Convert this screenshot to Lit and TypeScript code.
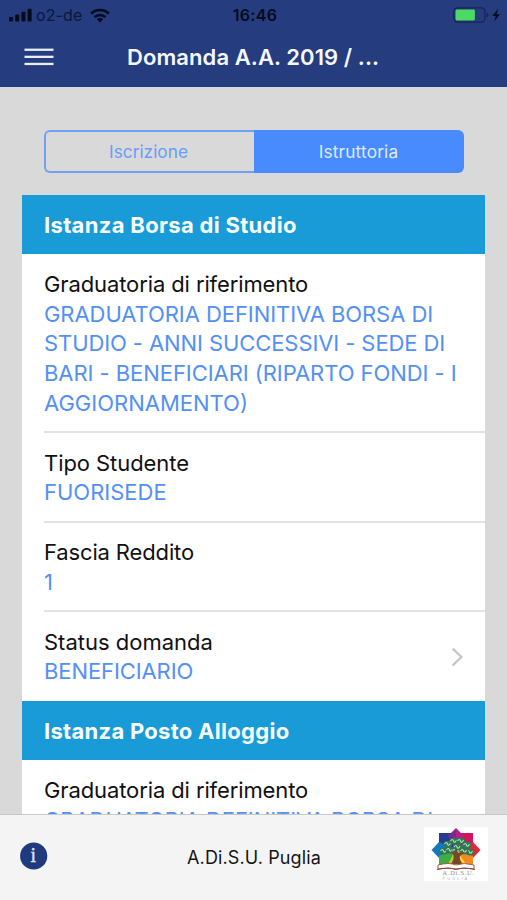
import { LitElement, html, css, svg } from "lit";
import { customElement, property } from "lit/decorators.js";

interface Row { label: string; lines: string[]; tracks: number[]; labelTrack: number; link?: boolean; }
interface Section { title: string; track: number; rows: Row[]; }

const SECTIONS: Section[] = [
  {
    title: "Istanza Borsa di Studio", track: 0.32,
    rows: [
      {
        label: "Graduatoria di riferimento", labelTrack: -0.11,
        lines: ["GRADUATORIA DEFINITIVA BORSA DI", "STUDIO - ANNI SUCCESSIVI - SEDE DI", "BARI - BENEFICIARI (RIPARTO FONDI - I", "AGGIORNAMENTO)"],
        tracks: [-0.06, -0.09, -0.06, 0],
      },
      { label: "Tipo Studente", labelTrack: -0.07, lines: ["FUORISEDE"], tracks: [0] },
      { label: "Fascia Reddito", labelTrack: -0.14, lines: ["1"], tracks: [0] },
      { label: "Status domanda", labelTrack: 0, lines: ["BENEFICIARIO"], tracks: [-0.1], link: true },
    ],
  },
  {
    title: "Istanza Posto Alloggio", track: 0.28,
    rows: [
      { label: "Graduatoria di riferimento", labelTrack: -0.11, lines: ["GRADUATORIA DEFINITIVA BORSA DI"], tracks: [-0.06] },
    ],
  },
];

@customElement("status-bar")
export class StatusBar extends LitElement {
  static styles = css`
    :host { display: grid; grid-template-columns: 1fr auto 1fr; align-items: center; height: 30px; padding: 0 6px 0 9px; color: #050a1c; font-size: 16px; line-height: 30px; }
    .left { display: flex; align-items: center; }
    .right { display: flex; align-items: center; justify-content: flex-end; }
    .carrier { margin: 0 8px 0 4px; letter-spacing: 0.1px; color: #0d1738; }
    .time { font-weight: 600; letter-spacing: 0.35px; }
    svg { display: block; }
  `;
  render() {
    return html`
      <div class="left">
        <svg width="23" height="14" viewBox="0 0 23 14" fill="#050a1c">
          <rect x="0" y="9" width="4" height="4.4" rx="1" /><rect x="6.2" y="6.5" width="4" height="6.9" rx="1" />
          <rect x="12.4" y="3.8" width="4" height="9.6" rx="1" /><rect x="18.6" y="0.8" width="4" height="12.6" rx="1" />
        </svg>
        <span class="carrier">o2-de</span>
        <svg width="20" height="15" viewBox="0 0 20 15">
          <path d="M1.2 5.6A12.6 12.6 0 0 1 18.8 5.6" fill="none" stroke="#050a1c" stroke-width="2.7" />
          <path d="M4.5 9.1A8 8 0 0 1 15.5 9.1" fill="none" stroke="#050a1c" stroke-width="2.5" />
          <path d="M10 14.4L6.8 11.3A4.6 4.6 0 0 1 13.2 11.3Z" fill="#050a1c" />
        </svg>
      </div>
      <span class="time">16:46</span>
      <div class="right">
        <svg width="48" height="16" viewBox="0 0 48 16">
          <rect x="0.9" y="0.9" width="31" height="14.2" rx="3.6" fill="none" stroke="#162452" stroke-width="1.2" />
          <rect x="2.5" y="2.5" width="19.4" height="11" rx="1.4" fill="#4cd964" />
          <path d="M33.5 5.4Q35.4 6.4 35.4 8T33.5 10.6Z" fill="#162452" />
          <path d="M45.2 1.8L39.3 9H42.8L41.2 14.5L47 7.2H43.6Z" fill="#050a1c" />
        </svg>
      </div>`;
  }
}

@customElement("segment-control")
export class SegmentControl extends LitElement {
  static styles = css`
    :host { display: grid; grid-template-columns: 1fr 1fr; height: 43px; font-size: 17.3px; }
    .seg { box-sizing: border-box; display: flex; align-items: center; justify-content: center; color: #6a9df6; border: 2px solid #72a1f3; border-right: 0; border-radius: 6px 0 0 6px; padding-right: 3px; }
    .active { background: #488aff; color: #dfeaff; border: 0; border-radius: 0 6px 6px 0; letter-spacing: 0.15px; padding: 0 1px 0 0; }
  `;
  render() {
    return html`<div class="seg">Iscrizione</div><div class="seg active">Istruttoria</div>`;
  }
}

@customElement("info-section")
export class InfoSection extends LitElement {
  @property({ attribute: false }) section!: Section;
  static styles = css`
    :host { display: block; font-size: 22px; line-height: 29.67px; white-space: nowrap; }
    .head { height: 59.4px; box-sizing: border-box; padding: 15.6px 0 0 22px; background: #189bd7; color: #f8fdff; font-weight: 700; }
    .row { margin-left: 22px; padding: 15.3px 0 12.8px; border-bottom: 2px solid #e3e3e3; display: flex; align-items: center; justify-content: space-between; }
    .head + .row { padding: 15.5px 0 13.2px; }
    .row:last-child { border-bottom-color: transparent; padding-bottom: 12px; }
    .label { color: #111; }
    .line { color: #5390f6; }
    .chevron { margin-right: 21px; display: block; }
  `;
  render() {
    return html`
      <div class="head"><span style="letter-spacing:${this.section.track}px">${this.section.title}</span></div>
      ${this.section.rows.map((r) => html`
        <div class="row">
          <div>
            <div class="label"><span style="letter-spacing:${r.labelTrack}px">${r.label}</span></div>
            ${r.lines.map((l, i) => html`<div class="line"><span style="letter-spacing:${r.tracks[i]}px">${l}</span></div>`)}
          </div>
          ${r.link ? html`<svg class="chevron" width="14" height="20" viewBox="0 0 14 20"><path d="M2.6 1.5L11.4 10L2.6 18.5" fill="none" stroke="#c6c6c8" stroke-width="2.4" /></svg>` : null}
        </div>`)}`;
  }
}

@customElement("adisu-logo")
export class AdisuLogo extends LitElement {
  static styles = css`
    :host { display: block; width: 64px; height: 54px; background: #fff; }
    svg { display: block; }
    .name { font: 6.5px "Liberation Serif", serif; fill: #8a8a90; letter-spacing: 0.7px; }
    .region { font: 4px "Liberation Sans", sans-serif; fill: #b4b4ba; letter-spacing: 2px; }
  `;
  render() {
    const leaves = [[20, 24, 4.5], [24, 17, 4.5], [30, 14, 4.5], [37, 14, 4.5], [43, 18, 4.5], [46, 25, 4.5], [26, 23, 4.5], [34, 20, 5], [40, 24, 4.5], [31, 24, 3.5]];
    return html`<svg width="64" height="54" viewBox="0 0 64 54">
      <path d="M15 6H49V39H15Z" fill="#d3145c" />
      <path d="M15 6H28L32 22L15 18Z" fill="#263c94" />
      <path d="M24 9L32 1L32 22Z" fill="#7b2a8d" /><path d="M40 9L32 1L32 22Z" fill="#b81e86" />
      <path d="M15 15L7.5 23L15 31L32 22Z" fill="#1479b9" /><path d="M49 15L56.5 23L49 31L32 22Z" fill="#e62635" />
      <path d="M15 29L32 22V39H15Z" fill="#41ab43" /><path d="M49 29L32 22V39H49Z" fill="#f18a22" />
      <path d="M32 22L23 39H32Z" fill="#b8ce32" /><path d="M32 22L43 39H32Z" fill="#ffd829" />
      ${leaves.map(([x, y, r]) => svg`<g><ellipse cx=${x} cy=${y} rx=${r} ry=${r * 0.75} fill="#2f7952" /><path d=${`M${x - r + 1} ${y}q2 -3 3 0t3 -1`} fill="none" stroke="#b9dfc5" stroke-width="1.1" /></g>`)}
      <path d="M27 37Q31 31 29 27L23 25L30 26L32 21L34 26L41 25L36 29Q35 33 39 37Z" fill="#78462a" />
      <path d="M14 38Q25 35 32 38Q40 35 50 38V42Q39 40 32 42Q25 40 14 42Z" fill="#fff" stroke="#a35c49" stroke-width="1" />
      <path d="M13 42.5Q25 40 32 42.5Q40 40 51 42.5" fill="none" stroke="#8e4935" stroke-width="1.2" />
      <text class="name" x="18.5" y="48.4">A.Di.S.U.</text>
      <text class="region" x="18.5" y="52.7">PUGLIA</text>
    </svg>`;
  }
}

@customElement("app-root")
export class AppRoot extends LitElement {
  static styles = css`
    :host { display: flex; flex-direction: column; width: 507px; height: 900px; overflow: hidden; background: #d9d9d9; font-family: Inter, "Liberation Sans", sans-serif; }
    .top { flex: none; height: 87px; background: #253c7f; }
    .nav { display: grid; grid-template-columns: 127px 1fr 127px; align-items: center; height: 54px; color: #f6f8ff; }
    .menu { margin-left: 24px; display: block; }
    .title { font-size: 22px; font-weight: 600; white-space: nowrap; letter-spacing: 0.08px; }
    .content { flex: 1; min-height: 0; overflow: hidden; padding: 43px 22px 0; }
    .segments { margin: 0 21px 22px 22px; }
    .card { background: #fff; width: 463px; }
    .foot { flex: none; height: 86px; box-sizing: border-box; border-top: 1.5px solid #c8c8c8; background: #f4f4f4; display: grid; grid-template-columns: 64px 1fr 64px; align-items: center; padding: 0 19px 2px 20px; }
    .org { text-align: center; font-size: 18px; letter-spacing: 0.12px; color: #151515; padding-top: 1.5px; }
    .info { display: block; margin-bottom: 2px; }
    .logo { margin-bottom: 6px; }
    .i { font: 400 20px "Liberation Serif", serif; fill: #dfe6ff; stroke: #dfe6ff; stroke-width: 0.3px; }
  `;
  render() {
    return html`
      <header class="top">
        <status-bar></status-bar>
        <div class="nav">
          <svg class="menu" width="30" height="20" viewBox="0 0 30 20" fill="#e9edfb"><rect x="0.5" y="1.6" width="29" height="2.3" /><rect x="0.5" y="8.7" width="29" height="2.3" /><rect x="0.5" y="15.8" width="29" height="2.3" /></svg>
          <span class="title">Domanda A.A. 2019 / ...</span>
        </div>
      </header>
      <main class="content">
        <segment-control class="segments"></segment-control>
        <div class="card">${SECTIONS.map((s) => html`<info-section .section=${s}></info-section>`)}</div>
      </main>
      <footer class="foot">
        <svg class="info" width="28" height="28" viewBox="0 0 28 28"><circle cx="13.7" cy="14" r="13.6" fill="#213a7d" /><text class="i" x="13.3" y="20.4" text-anchor="middle">i</text></svg>
        <span class="org">A.Di.S.U. Puglia</span>
        <adisu-logo class="logo"></adisu-logo>
      </footer>`;
  }
}
